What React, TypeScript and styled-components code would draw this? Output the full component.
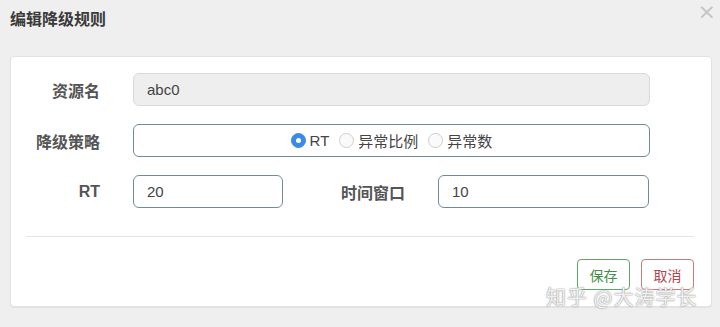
import React from 'react'
import styled, { createGlobalStyle } from 'styled-components'

const GlobalStyle = createGlobalStyle`
    html, body {
        margin:0;
        padding:0;
        background:#efefef;
    }
    body {
        font-family:"Liberation Sans", "Noto Sans CJK SC", sans-serif;
        color:#333;
    }
`

const Page = styled.div`
    position:relative;
    width:720px;
    height:327px;
    overflow:hidden;
    background:#efefef;
`

const Header = styled.div`
    height:56px;
    display:flex;
    align-items:flex-start;
    justify-content:space-between;
    padding:0 0 0 10px;
    box-sizing:border-box;
`

const Title = styled.h4`
    margin:10px 0 0;
    font-size:16px;
    line-height:20px;
    font-weight:bold;
    color:#3a3a3a;
`

const Close = styled.span`
    margin:1px 4px 0 0;
    font-size:22px;
    line-height:22px;
    color:#c4c4c4;
    font-family:"DejaVu Sans", sans-serif;
`

const Panel = styled.div`
    width:702px;
    margin-left:10px;
    background:#fff;
    border:1px solid #e2e2e2;
    border-radius:4px;
    box-sizing:border-box;
    padding:16px 17px 16px 0;
    box-shadow:0 1px 1px rgba(0,0,0,.05);
`

const Row = styled.div`
    display:flex;
    align-items:center;
    height:33px;
    & + & {
        margin-top:18px;
    }
`

const Label = styled.label<{w:number}>`
    width:${p=>p.w}px;
    flex:none;
    text-align:right;
    font-size:16px;
    font-weight:bold;
    color:#555;
    margin-right:33px;
`

const Input = styled.div<{w:number; disabled?:boolean}>`
    width:${p=>p.w}px;
    height:33px;
    flex:none;
    box-sizing:border-box;
    border:1px solid ${p=>p.disabled?'#d9d9d9':'#6f8c94'};
    background:${p=>p.disabled?'#eeeeee':'#fff'};
    border-radius:6px;
    padding:0 13px;
    display:flex;
    align-items:center;
    font-size:15px;
    color:#444;
`

const RadioBox = styled(Input)`
    justify-content:center;
    gap:10px;
    padding:0;
`

const Radio = styled.span`
    display:inline-flex;
    align-items:center;
    font-size:15px;
    color:#444;
`

const Dot = styled.span<{checked?:boolean}>`
    width:15px;
    height:15px;
    box-sizing:border-box;
    border-radius:50%;
    margin-right:4px;
    border:1px solid ${p=>p.checked?'#3b8ae6':'#cfcfcf'};
    background:${p=>p.checked?'#3b8ae6':'#fafafa'};
    display:inline-flex;
    align-items:center;
    justify-content:center;
    &::after {
        content:'';
        width:5px;
        height:5px;
        border-radius:50%;
        background:#fff;
        display:${p=>p.checked?'block':'none'};
    }
`

const Divider = styled.hr`
    margin:28px 0 22px 15px;
    border:0;
    border-top:1px solid #e5e5e5;
`

const Footer = styled.div`
    display:flex;
    justify-content:flex-end;
    gap:11px;
`

const Button = styled.button<{tone:'ok'|'cancel'}>`
    width:53px;
    height:31px;
    padding:0;
    background:#fff;
    border-radius:4px;
    font-size:14px;
    font-family:inherit;
    border:1px solid ${p=>p.tone==='ok'?'#5fa86a':'#c97a80'};
    color:${p=>p.tone==='ok'?'#3f8f47':'#b0454d'};
`

const Watermark = styled.div`
    position:absolute;
    left:546px;
    top:282px;
    font-size:20px;
    color:rgba(255,255,255,.9);
    letter-spacing:1px;
    text-shadow:0 0 1px #888, 0 0 2px #aaa;
    font-family:"Noto Sans CJK SC", sans-serif;
`

const App:React.FC = () => {
    return (
        <Page>
            <GlobalStyle/>
            <Header>
                <Title>编辑降级规则</Title>
                <Close>×</Close>
            </Header>
            <Panel>
                <Row>
                    <Label w={89}>资源名</Label>
                    <Input w={517} disabled>abc0</Input>
                </Row>
                <Row>
                    <Label w={89}>降级策略</Label>
                    <RadioBox w={517}>
                        <Radio><Dot checked/>RT</Radio>
                        <Radio><Dot/>异常比例</Radio>
                        <Radio><Dot/>异常数</Radio>
                    </RadioBox>
                </Row>
                <Row>
                    <Label w={89}>RT</Label>
                    <Input w={150}>20</Input>
                    <Label w={122}>时间窗口</Label>
                    <Input w={211}>10</Input>
                </Row>
                <Divider/>
                <Footer>
                    <Button tone='ok'>保存</Button>
                    <Button tone='cancel'>取消</Button>
                </Footer>
            </Panel>
            <Watermark>知乎 @大涛学长</Watermark>
        </Page>
    )
}

export default App
